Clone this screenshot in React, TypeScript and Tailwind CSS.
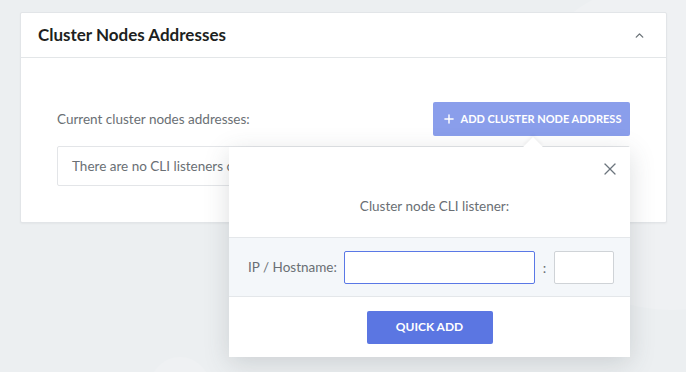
import { ChevronUp, Plus, X } from "lucide-react";

export default function App() {
  return (
    <div
      className="relative h-[372px] w-[686px] overflow-hidden bg-[#eceff1] pt-[12px] pl-[20px]"
      style={{ fontFamily: "Lato, 'Noto Sans', sans-serif" }}
    >
      {/* faint background shapes */}
      <div className="absolute -right-[150px] -top-[20px] h-[330px] w-[330px] rounded-full bg-[#eff1f3]" />
      <div className="absolute bottom-[-45px] left-[150px] h-[60px] w-[60px] rounded-full bg-[#eff1f3]" />

      <div className="relative w-[647px] rounded-[2px] border border-[#e2e5e8] bg-white shadow-[0_1px_2px_rgba(0,0,0,0.04)]">
        <div className="flex h-[45px] items-center justify-between border-b border-[#e3e6e8] pl-[17px] pr-[20px]">
          <h2 className="text-[17px] font-bold text-[#1d1f21]">
            Cluster Nodes Addresses
          </h2>
          <ChevronUp size={13} strokeWidth={2.5} className="text-[#6b7378]" />
        </div>

        <div className="px-[36px] pt-[44px] pb-[36px]">
          <div className="flex items-center justify-between">
            <span className="text-[13.5px] text-[#6a6f74]">
              Current cluster nodes addresses:
            </span>
            <button className="flex h-[34px] w-[197px] items-center justify-center gap-[5px] rounded-[2px] bg-[#8a9eeb] text-[11px] font-bold text-white">
              <Plus size={14} strokeWidth={2.5} />
              ADD CLUSTER NODE ADDRESS
            </button>
          </div>
          <div className="mt-[10px] flex h-[40px] items-center rounded-[2px] border border-[#e3e5e8] px-[14px] text-[13.5px] text-[#6a6f74]">
            There are no CLI listeners configured.
          </div>
        </div>
      </div>

      {/* popover */}
      <div className="absolute left-[229px] top-[147px] w-[401px] bg-white shadow-[0_6px_24px_rgba(60,70,80,0.18)]">
        <div className="absolute -top-[7px] left-[297px] h-[14px] w-[14px] rotate-45 bg-white shadow-[-2px_-2px_3px_rgba(0,0,0,0.04)]" />
        <div className="relative flex h-[90px] items-end justify-center pb-[21px] pl-[10px]">
          <button className="absolute right-[10px] top-[12px] text-[#6c757d]">
            <X size={20} strokeWidth={1.5} />
          </button>
          <span className="text-[13.5px] text-[#6a6f74]">
            Cluster node CLI listener:
          </span>
        </div>
        <div className="flex h-[60px] items-center border-y border-[#e4e7ea] bg-[#f4f7fa] pl-[19px]">
          <label className="w-[96px] text-[13.5px] text-[#6a6f74]">
            IP / Hostname:
          </label>
          <input className="h-[33px] w-[191px] rounded-[2px] border border-[#5a78e6] bg-white outline-none" />
          <span className="w-[19px] text-center text-[14px] text-[#6a6f74]">
            :
          </span>
          <input className="h-[33px] w-[60px] rounded-[2px] border border-[#cfd3d7] bg-white outline-none" />
        </div>
        <div className="flex h-[60px] items-center justify-center">
          <button className="h-[33px] w-[126px] rounded-[2px] bg-[#5b76e2] text-[12px] font-bold text-white">
            QUICK ADD
          </button>
        </div>
      </div>
    </div>
  );
}
